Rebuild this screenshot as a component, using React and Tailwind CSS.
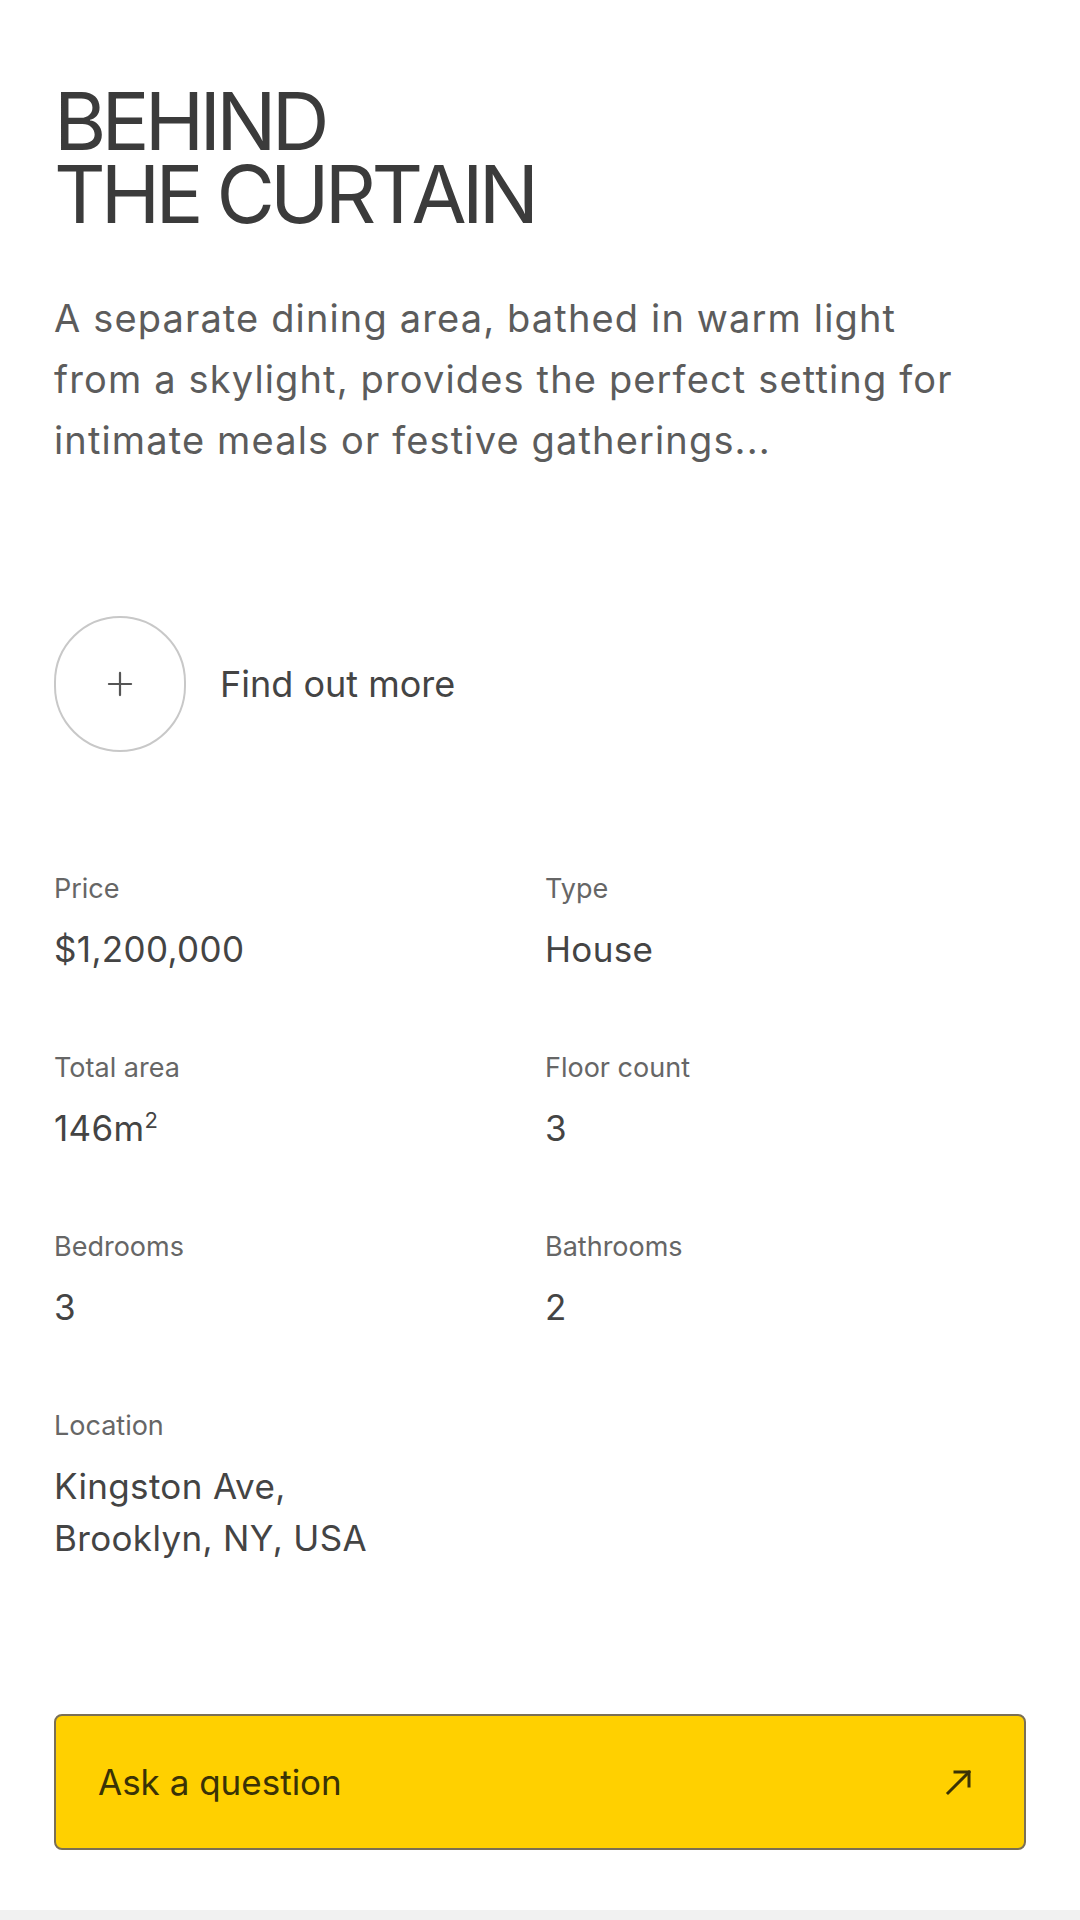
import { Plus } from "lucide-react";

const details = [
  { label: "Price", value: "$1,200,000" },
  { label: "Type", value: "House" },
  { label: "Total area", value: <>146m<sup className="text-[22px] -top-[13px]">2</sup></> },
  { label: "Floor count", value: "3" },
  { label: "Bedrooms", value: "3" },
  { label: "Bathrooms", value: "2" },
];

export default function App() {
  return (
    <div
      className="min-h-[1920px] bg-white flex flex-col"
      style={{ fontFamily: "Inter, 'Open Sans', sans-serif" }}
    >
      <div className="px-[54px] pt-[84px]">
        {/* Title */}
        <h1 className="text-[80px] leading-[73px] font-normal text-[#3b3b3b] tracking-[-0.06em]">
          BEHIND
          <br />
          THE CURTAIN
        </h1>

        <p className="mt-[58px] text-[38px] leading-[61px] text-[#5c5c5c] tracking-[0.03em]">
          A separate dining area, bathed in warm light
          <br />
          from a skylight, provides the perfect setting for
          <br />
          intimate meals or festive gatherings...
        </p>

        {/* Find out more */}
        <button className="mt-[145px] flex items-center gap-[34px]">
          <span className="w-[132px] h-[136px] rounded-full border-2 border-[#c8c8c8] flex items-center justify-center">
            <Plus className="w-[38px] h-[38px] text-[#555]" strokeWidth={1.4} />
          </span>
          <span className="text-[36px] text-[#444]">Find out more</span>
        </button>

        {/* Details */}
        <div className="mt-[119px] grid grid-cols-2 gap-x-[10px] gap-y-[75px]">
          {details.map((d) => (
            <div key={d.label}>
              <p className="text-[27px] leading-[36px] text-[#666]">{d.label}</p>
              <p className="mt-[16px] text-[35px] leading-[52px] text-[#444] tracking-[0.01em]">{d.value}</p>
            </div>
          ))}
          <div className="col-span-2">
            <p className="text-[27px] leading-[36px] text-[#666]">Location</p>
            <p className="mt-[16px] text-[35px] leading-[52px] text-[#444] tracking-[0.01em]">
              Kingston Ave,
              <br />
              Brooklyn, NY, USA
            </p>
          </div>
        </div>

        {/* CTA */}
        <button className="mt-[150px] w-full h-[136px] rounded-[8px] border-2 border-[#7a6f55] bg-[#ffd000] flex items-center justify-between pl-[42px] pr-[50px]">
          <span className="text-[35px] text-[#3a3206]">Ask a question</span>
          <svg width="30" height="30" viewBox="0 0 30 30" fill="none" stroke="#3a3206" strokeWidth="3" strokeLinecap="square">
            <path d="M4 26 L25 5" />
            <path d="M11 5 H25 V19" />
          </svg>
        </button>
      </div>

      <div className="mt-auto h-[10px] bg-[#f1f1f1]" />
    </div>
  );
}
